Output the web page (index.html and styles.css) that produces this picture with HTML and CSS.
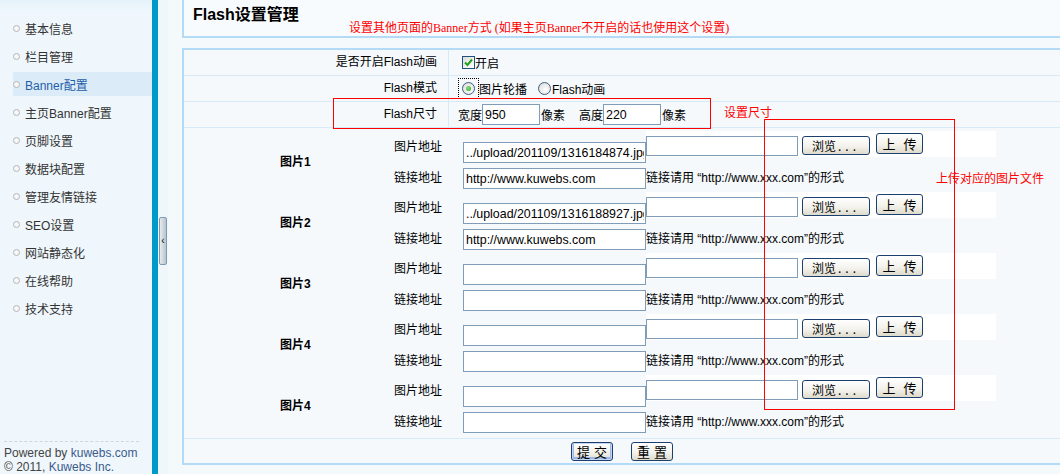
FILE: index.html
```html
<!DOCTYPE html>
<html lang="zh-CN">
<head>
<meta charset="utf-8">
<title>Flash设置管理</title>
<link rel="stylesheet" href="styles.css">
</head>
<body>
<div class="app">
  <aside class="sidebar">
    <ul class="menu">
      <li><a href="#"><span class="bullet"></span>基本信息</a></li>
      <li><a href="#"><span class="bullet"></span>栏目管理</a></li>
      <li class="active"><a href="#"><span class="bullet"></span>Banner配置</a></li>
      <li><a href="#"><span class="bullet"></span>主页Banner配置</a></li>
      <li><a href="#"><span class="bullet"></span>页脚设置</a></li>
      <li><a href="#"><span class="bullet"></span>数据块配置</a></li>
      <li><a href="#"><span class="bullet"></span>管理友情链接</a></li>
      <li><a href="#"><span class="bullet"></span>SEO设置</a></li>
      <li><a href="#"><span class="bullet"></span>网站静态化</a></li>
      <li><a href="#"><span class="bullet"></span>在线帮助</a></li>
      <li><a href="#"><span class="bullet"></span>技术支持</a></li>
    </ul>
    <div class="foot">
      <div>Powered by <span class="foot-link">kuwebs.com</span></div>
      <div>© 2011, <span class="foot-link">Kuwebs Inc.</span></div>
    </div>
  </aside>
  <div class="splitter"></div>
  <div class="gutter"><span class="handle">‹</span></div>
  <main class="main">
    <div class="page-head">
      <h1>Flash设置管理</h1>
      <p class="note">设置其他页面的Banner方式 (如果主页Banner不开启的话也使用这个设置)</p>
    </div>
    <div class="form-box">
      <div class="row">
        <div class="lbl">是否开启Flash动画</div>
        <div class="val">
          <span class="check"><svg width="9" height="9" viewBox="0 0 9 9"><path d="M1 4.5 L3.5 7 L8 1.5" fill="none" stroke="#21a121" stroke-width="2"/></svg></span>开启
        </div>
      </div>
      <div class="row">
        <div class="lbl">Flash模式</div>
        <div class="val">
          <span class="focus"><span class="radio on"></span></span>图片轮播
          <span class="radio second"></span><span class="rtext">Flash动画</span>
        </div>
      </div>
      <div class="row">
        <div class="lbl">Flash尺寸</div>
        <div class="val">
          宽度<input class="size" type="text" value="950"><span class="unit">像素</span>
          <span class="hlabel">高度</span><input class="size" type="text" value="220"><span class="unit">像素</span>
        </div>
      </div>
      <div class="pics">
        <div class="pic">
          <div class="pic-name">图片1</div>
          <div class="pic-rows">
            <div class="prow prow-a">
              <span class="plabel">图片地址</span>
              <input class="text" type="text" value="../upload/201109/1316184874.jpg">
              <div class="filebox"><span class="file"></span><button class="btn browse">浏览<span class="dots">...</span></button><button class="btn up">上 传</button></div>
            </div>
            <div class="prow prow-b">
              <span class="plabel">链接地址</span>
              <input class="text" type="text" value="http://www.kuwebs.com">
              <span class="hint">链接请用 “http://www.xxx.com”的形式</span>
            </div>
          </div>
        </div>
        <div class="pic">
          <div class="pic-name">图片2</div>
          <div class="pic-rows">
            <div class="prow prow-a">
              <span class="plabel">图片地址</span>
              <input class="text" type="text" value="../upload/201109/1316188927.jpg">
              <div class="filebox"><span class="file"></span><button class="btn browse">浏览<span class="dots">...</span></button><button class="btn up">上 传</button></div>
            </div>
            <div class="prow prow-b">
              <span class="plabel">链接地址</span>
              <input class="text" type="text" value="http://www.kuwebs.com">
              <span class="hint">链接请用 “http://www.xxx.com”的形式</span>
            </div>
          </div>
        </div>
        <div class="pic">
          <div class="pic-name">图片3</div>
          <div class="pic-rows">
            <div class="prow prow-a">
              <span class="plabel">图片地址</span>
              <input class="text" type="text" value="">
              <div class="filebox"><span class="file"></span><button class="btn browse">浏览<span class="dots">...</span></button><button class="btn up">上 传</button></div>
            </div>
            <div class="prow prow-b">
              <span class="plabel">链接地址</span>
              <input class="text" type="text" value="">
              <span class="hint">链接请用 “http://www.xxx.com”的形式</span>
            </div>
          </div>
        </div>
        <div class="pic">
          <div class="pic-name">图片4</div>
          <div class="pic-rows">
            <div class="prow prow-a">
              <span class="plabel">图片地址</span>
              <input class="text" type="text" value="">
              <div class="filebox"><span class="file"></span><button class="btn browse">浏览<span class="dots">...</span></button><button class="btn up">上 传</button></div>
            </div>
            <div class="prow prow-b">
              <span class="plabel">链接地址</span>
              <input class="text" type="text" value="">
              <span class="hint">链接请用 “http://www.xxx.com”的形式</span>
            </div>
          </div>
        </div>
        <div class="pic">
          <div class="pic-name">图片4</div>
          <div class="pic-rows">
            <div class="prow prow-a">
              <span class="plabel">图片地址</span>
              <input class="text" type="text" value="">
              <div class="filebox"><span class="file"></span><button class="btn browse">浏览<span class="dots">...</span></button><button class="btn up">上 传</button></div>
            </div>
            <div class="prow prow-b">
              <span class="plabel">链接地址</span>
              <input class="text" type="text" value="">
              <span class="hint">链接请用 “http://www.xxx.com”的形式</span>
            </div>
          </div>
        </div>
      </div>
      <div class="actions">
        <button class="btn submit">提 交</button>
        <button class="btn reset">重 置</button>
      </div>
    </div>
  </main>
  <div class="anno-box anno-size"></div>
  <div class="anno-text anno-size-text">设置尺寸</div>
  <div class="anno-box anno-upload"></div>
  <div class="anno-text anno-upload-text">上传对应的图片文件</div>
</div>
</body>
</html>
```

FILE: styles.css
```css
* { box-sizing: border-box; }
html, body { margin: 0; padding: 0; }
body {
  width: 1060px;
  height: 474px;
  overflow: hidden;
  font: 12px "Liberation Sans", "Noto Sans CJK SC", sans-serif;
  color: #000;
  background: #f4f9fc;
}
.app { position: relative; display: flex; width: 1060px; height: 474px; }

/* sidebar */
.sidebar {
  width: 152px;
  flex: none;
  display: flex;
  flex-direction: column;
  background: linear-gradient(#e5f1fa, #eff7fc 12px);
}
.menu { list-style: none; margin: 0; padding: 12px 0 0 13px; }
.menu li { height: 28px; padding-top: 4px; }
.menu a {
  display: flex;
  align-items: center;
  gap: 5px;
  height: 24px;
  color: #333;
  text-decoration: none;
  font-size: 12px;
}
.bullet {
  width: 7px;
  height: 7px;
  border: 1px solid #b4b4b4;
  border-radius: 50%;
  background: #f7f7f7;
  flex: none;
}
.menu li.active a { background: #dbecf8; color: #1f5ea8; }
.foot {
  margin: auto 13px 0 4px;
  height: 33px;
  padding-top: 4px;
  border-top: 1px dashed #cfd7dc;
  line-height: 14px;
  color: #444;
  white-space: nowrap;
}
.foot-link { color: #3b5b8c; }

.splitter { width: 6px; flex: none; background: #0099cc; }
.gutter {
  width: 24px;
  flex: none;
  background: linear-gradient(90deg, #eff7fb 10px, #f4f9fc 10px);
}
.handle {
  display: flex;
  align-items: center;
  justify-content: center;
  width: 8px;
  height: 48px;
  margin: 217px 0 0 1px;
  border: 1px solid #7d9ab2;
  border-radius: 2px;
  background: linear-gradient(90deg, #e6ebee, #b9c4cd);
  font-size: 10px;
  line-height: 1;
  color: #000;
}

/* main */
.main { flex: 1; min-width: 0; margin-right: -2px; }
.page-head {
  display: flex;
  height: 38px;
  border-left: 2px solid #b3dbf5;
  border-bottom: 2px solid #b3dbf5;
  background: #f8fbfd;
  padding-left: 9px;
}
.page-head h1 {
  margin: 5px 0 0;
  width: 156px;
  flex: none;
  font-size: 16px;
  line-height: 20px;
  font-weight: bold;
  color: #000;
}
.note {
  margin: 21px 0 0;
  line-height: 14px;
  color: #f00;
  font-family: "Liberation Serif", "Noto Sans CJK SC", serif;
  font-size: 12px;
  white-space: nowrap;
}

.form-box {
  margin-top: 10px;
  border: 2px solid #b3dbf5;
  background: #f5f9fc;
}
.row { display: flex; height: 26px; border-bottom: 1px solid #d6eaf7; }
.lbl {
  width: 265px;
  flex: none;
  text-align: right;
  padding-right: 11px;
  border-right: 1px solid #d6eaf7;
  line-height: 25px;
}
.val { display: flex; align-items: center; padding-left: 9px; white-space: nowrap; }

.check {
  display: inline-flex;
  align-items: center;
  justify-content: center;
  width: 13px;
  height: 13px;
  margin-left: 4px;
  border: 1px solid #1c5180;
  background: linear-gradient(135deg, #dcdcd6, #fff);
}
.focus {
  display: inline-flex;
  align-items: center;
  justify-content: center;
  width: 21px;
  height: 21px;
  border: 1px dotted #000;
}
.radio {
  display: inline-block;
  width: 13px;
  height: 13px;
  border: 1px solid #3c5f86;
  border-radius: 50%;
  background: radial-gradient(circle at 60% 60%, #fff, #d6d6d0);
  position: relative;
}
.radio.on::after {
  content: "";
  position: absolute;
  left: 3px;
  top: 3px;
  width: 5px;
  height: 5px;
  border-radius: 50%;
  background: radial-gradient(circle at 40% 40%, #8de08d, #21a121);
}
.radio.second { margin-left: 11px; }
.rtext { margin-left: 1px; }

.size {
  width: 58px;
  height: 21px;
  border: 1px solid #7f9db9;
  padding: 0 2px;
  font: 12.4px "Liberation Sans", sans-serif;
  color: #000;
  background: #fff;
  outline: none;
}
.unit { margin-left: 1px; }
.hlabel { margin-left: 14px; }

.pics { padding: 2px 0 3px; border-bottom: 1px solid #d6eaf7; }
.pic { display: flex; height: 61px; }
.pic-name {
  width: 210px;
  flex: none;
  padding-left: 96px;
  display: flex;
  align-items: center;
  font-weight: bold;
}
.pic-rows { display: flex; flex-direction: column; }
.prow { display: flex; align-items: flex-start; white-space: nowrap; }
.prow-a { height: 35px; }
.prow-b { height: 26px; }
.plabel { width: 69px; flex: none; line-height: 14px; margin-top: 10px; }
.prow-b .plabel { margin-top: 6px; }
.text {
  width: 183px;
  height: 21px;
  margin-top: 12px;
  border: 1px solid #7f9db9;
  padding: 0 1px 0 2px;
  font: 12.4px "Liberation Sans", sans-serif;
  color: #000;
  background: #fff;
  outline: none;
  flex: none;
}
.prow-b .text { margin-top: 3px; }
.filebox {
  display: flex;
  align-items: flex-start;
  width: 350px;
  height: 26px;
  margin-top: 1px;
  background: #fff;
}
.file {
  width: 152px;
  height: 20px;
  margin-top: 5px;
  border: 1px solid #7f9db9;
  background: #fff;
}
.hint { margin-top: 6px; line-height: 14px; }

.btn {
  padding: 0;
  border: 1px solid #1b3f6e;
  border-radius: 3px;
  background: linear-gradient(#ffffff, #f3f2ec 55%, #dedbcc);
  font: 12px "Noto Sans CJK SC", sans-serif;
  line-height: 1;
  color: #000;
  white-space: pre;
}
.browse { width: 68px; height: 19px; margin: 5px 0 0 4px; }
.dots { letter-spacing: 4px; margin-left: 2px; }
.up { width: 47px; height: 21px; margin: 2px 0 0 6px; word-spacing: 5px; font-size: 13px; }

.actions {
  display: flex;
  justify-content: center;
  align-items: center;
  gap: 18px;
  height: 24px;
}
.submit, .reset { width: 42px; height: 19px; word-spacing: 1px; font-size: 13px; }
.submit { box-shadow: inset 0 0 0 1px #c4d6f3, inset 0 -1px 0 2px #9bb8e6; }

/* annotations */
.anno-box { position: absolute; border: 1px solid #f00; }
.anno-size { left: 333px; top: 98px; width: 378px; height: 31px; }
.anno-upload { left: 764px; top: 119px; width: 191px; height: 291px; }
.anno-text {
  position: absolute;
  color: #f00;
  line-height: 14px;
  font-family: "Noto Sans CJK SC", sans-serif;
  white-space: nowrap;
}
.anno-size-text { left: 724px; top: 105px; }
.anno-upload-text { left: 936px; top: 171px; }
```
